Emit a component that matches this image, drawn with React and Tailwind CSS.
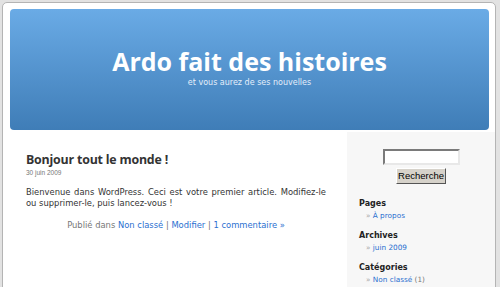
import React from 'react';

const verdana = { fontFamily: '"DejaVu Sans", Verdana, sans-serif' };

const SideBlock = ({ title, children }) => (
  <div className="mb-[9px]">
    <h2 className="text-[8px] font-bold text-[#222] leading-[12px]">{title}</h2>
    <ul className="pl-[7px] mt-[1px] text-[7.3px] leading-[10px]">{children}</ul>
  </div>
);

const App = () => {
  return (
    <div className="h-[287px] overflow-hidden bg-[#e2e2e2] pt-[2px] pl-[2px] font-['DejaVu_Sans',sans-serif]">
      <div className="w-[494px] h-[300px] bg-white border border-[#b4b4b4] rounded-t-[5px] flex flex-col">
        <header className="mt-[6px] ml-[7px] mr-[6px] h-[121px] rounded-[4px] bg-gradient-to-b from-[#6aabe6] to-[#3f7db7] flex flex-col items-center pt-[37px]">
          <h1 className="text-white font-bold text-[25px] leading-[31px] font-['Open_Sans',sans-serif]">
            Ardo fait des histoires
          </h1>
          <p className="text-[#e4eefa] text-[8px] leading-[10px] mt-[1px]">et vous aurez de ses nouvelles</p>
        </header>

        <div className="flex flex-1 mt-[2px]">
          <main className="w-[344px] pt-[19px] pl-[23px] pr-[21px]">
            <h2 className="text-[12.4px] font-bold text-[#333] leading-[17px] tracking-[-0.2px] font-['Open_Sans',sans-serif]">
              Bonjour tout le monde !
            </h2>
            <p className="text-[6.5px] text-[#777] leading-[9px] font-['Liberation_Sans',sans-serif]">30 juin 2009</p>
            <p className="mt-[10px] text-[8.4px] leading-[11px] text-[#333] text-justify" style={verdana}>
              Bienvenue dans WordPress. Ceci est votre premier article. Modifiez-le ou supprimer-le, puis lancez-vous !
            </p>
            <p className="mt-[11px] text-center text-[8.4px] leading-[11px] text-[#777]">
              Publié dans <a className="text-[#2a6fd0]">Non classé</a> | <a className="text-[#2a6fd0]">Modifier</a> |{' '}
              <a className="text-[#2a6fd0]">1 commentaire »</a>
            </p>
          </main>

          <aside className="flex-1 bg-[#f7f7f7] pt-[17px] pl-[12px]">
            <div className="flex flex-col items-center gap-[3px] -ml-[12px] mb-[14px]">
              <input className="w-[77px] h-[16px] bg-white border-2 border-t-[#7a7a7a] border-l-[#7a7a7a] border-b-[#e8e8e8] border-r-[#e8e8e8] outline-none" />
              <button className="w-[50px] h-[16px] bg-[#d6d2ca] border border-t-white border-l-white border-r-[#555] border-b-[#555] text-[9.5px] leading-[12px] text-black font-['Liberation_Sans',sans-serif]">
                Recherche
              </button>
            </div>
            <SideBlock title="Pages">
              <li><span className="text-[#aaa]">»</span> <a className="text-[#2a6fd0]">À propos</a></li>
            </SideBlock>
            <SideBlock title="Archives">
              <li><span className="text-[#aaa]">»</span> <a className="text-[#2a6fd0]">juin 2009</a></li>
            </SideBlock>
            <SideBlock title="Catégories">
              <li>
                <span className="text-[#aaa]">»</span> <a className="text-[#2a6fd0]">Non classé</a>{' '}
                <span className="text-[#777]">(1)</span>
              </li>
            </SideBlock>
          </aside>
        </div>
      </div>
    </div>
  );
};

export default App;
